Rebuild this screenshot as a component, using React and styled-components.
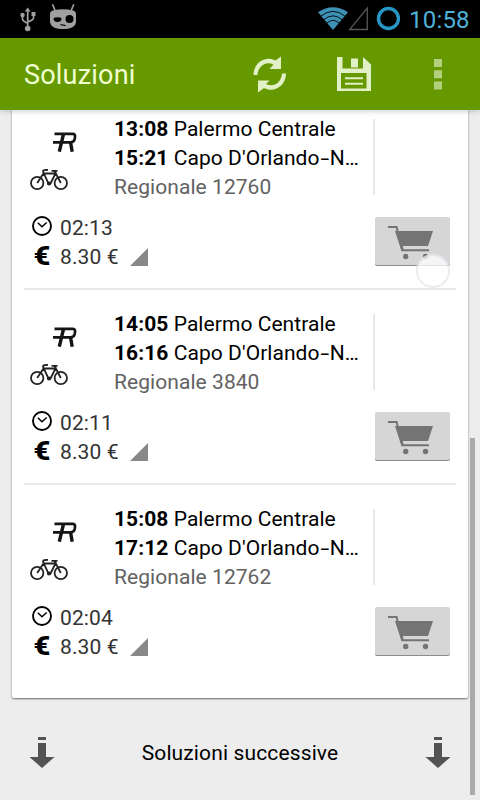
import React from "react";
import styled, { createGlobalStyle } from "styled-components";

const GlobalStyle = createGlobalStyle`
  * { box-sizing: border-box; }
  body { margin: 0; background: #ededed; font-family: Roboto, "Noto Sans", sans-serif; }
  svg { display: block; flex: none; }
`;

const Screen = styled.div`
  width: 480px;
  height: 800px;
  display: flex;
  flex-direction: column;
  overflow: hidden;
  background: #ededed;
`;

const StatusBar = styled.div`
  height: 38px;
  flex: none;
  display: flex;
  align-items: flex-start;
  padding: 0 10px 0 20px;
  background: #000;
`;

const StatusIcons = styled.div`
  display: flex;
  gap: 14px;
  padding-top: 4px;
  flex: 1;
`;

const SignalIcons = styled.div`
  display: flex;
  padding-top: 6px;
`;

const Clock = styled.span`
  width: 61px;
  margin-left: 9px;
  line-height: 40px;
  font-size: 24px;
  letter-spacing: 0.2px;
  color: #4fb0d8;
  white-space: nowrap;
`;

const ActionBar = styled.header`
  height: 72px;
  flex: none;
  display: flex;
  align-items: center;
  padding: 0 38px 0 24px;
  background: #669900;
  box-shadow: 0 1px 6px rgba(0, 0, 0, 0.2);
  z-index: 1;
`;

const Title = styled.h1`
  flex: 1;
  margin: 0;
  padding-top: 2px;
  font-size: 27px;
  font-weight: 400;
  letter-spacing: 0.2px;
  color: #f0ffd0;
`;

const Actions = styled.div`
  display: flex;
  align-items: center;
`;

const Content = styled.main`
  height: 690px;
  display: flex;
  overflow: hidden;
  padding-left: 12px;
`;

const Column = styled.div`
  width: 456px;
  display: flex;
  flex-direction: column;
  justify-content: flex-end;
`;

const Card = styled.section`
  flex: none;
  height: 603px;
  padding: 0 12px;
  background: #fff;
  border-radius: 0 0 2px 2px;
  box-shadow: 0 1px 2px rgba(0, 0, 0, 0.55);
`;

const Row = styled.article`
  height: 195px;
  border-bottom: 2px solid ${(p) => (p.$last ? "transparent" : "#e8e8e8")};
`;

const Journey = styled.div`
  height: 118px;
  display: flex;
  padding-top: 20px;
`;

const TrainIcons = styled.div`
  width: 90px;
  display: flex;
  flex-direction: column;
  gap: 17px;
  padding: 17px 0 0 6px;
`;

const LogoSlot = styled.div`
  padding-left: 23px;
`;

const Stations = styled.div`
  width: 259px;
`;

const Station = styled.div`
  width: 252px;
  font-size: 21px;
  line-height: 29px;
  letter-spacing: 0.06px;
  color: ${(p) => (p.$muted ? "#626262" : "#000")};
  white-space: nowrap;
  b { font-weight: 700; }
`;

const Dash = styled.span`
  display: inline-block;
  margin: 0 2.2px;
  transform: scaleX(1.5);
`;

const Divider = styled.div`
  width: 2px;
  height: 76px;
  margin-top: 4px;
  background: #e8e8e8;
`;

const Details = styled.div`
  display: flex;
  justify-content: space-between;
  padding: 0 6px 0 8px;
`;

const Facts = styled.div`
  display: flex;
  flex-direction: column;
`;

const Fact = styled.div`
  height: 29px;
  display: flex;
  align-items: center;
  font-size: 21px;
  color: #333;
  letter-spacing: 0.1px;
`;

const ClockSlot = styled.div`
  margin-bottom: 3px;
`;

const FactText = styled.span`
  width: 70px;
  padding-left: 8px;
  box-sizing: content-box;
  white-space: nowrap;
`;

const EuroMark = styled.span`
  width: 20px;
  text-align: center;
  font-size: 26px;
  line-height: 29px;
  font-weight: 900;
  color: #000;
  transform: scaleX(1.12);
`;

const CartButton = styled.button`
  position: relative;
  width: 75px;
  height: 48px;
  margin-top: 4px;
  padding: 5px 0 0 13px;
  border: 0;
  border-radius: 2px;
  background: #d6d6d6;
  box-shadow: 0 1px 0 #8c8c8c;
  svg { margin-top: -2px; }
`;

const TouchRing = styled.span`
  position: absolute;
  left: 41px;
  top: 37px;
  width: 34px;
  height: 34px;
  border: 2px solid rgba(205, 205, 220, 0.4);
  border-radius: 50%;
  background: rgba(255, 255, 255, 0.75);
`;

const Footer = styled.footer`
  height: 102px;
  flex: none;
  display: flex;
  align-items: center;
  justify-content: space-between;
  padding: 6px 17px 0;
  font-size: 21px;
  letter-spacing: 0.13px;
  color: #000;
`;

const FooterLabel = styled.span`
  padding-top: 2px;
`;

const ScrollThumb = styled.div`
  width: 5px;
  height: 357px;
  margin: 328px 0 0 2px;
  background: #aaa;
`;

const UsbIcon = () => (
  <svg width="16" height="28" viewBox="0 0 16 28" fill="none" stroke="#a0a0a0" strokeWidth="1.7">
    <path d="M7.7 7V25M2.5 11v4q0 2 5 4.300M13.500 10v4q0 2-5.800 4" />
    <path d="M4.700 7.500L7.700 3.500l3 4z" fill="#a0a0a0" stroke="none" />
    <circle cx="7.700" cy="24.500" r="2.800" fill="#a0a0a0" stroke="none" />
    <circle cx="2.500" cy="11" r="2.200" fill="#a0a0a0" stroke="none" />
    <path d="M11.500 8h4v4h-4z" fill="#a0a0a0" stroke="none" />
  </svg>
);

const CidIcon = () => (
  <svg width="27" height="28" viewBox="0 0 27 28">
    <path d="M2.800 1l2.500 6M23.500 1l-2.500 6" stroke="#a0a0a0" strokeWidth="1.700" strokeLinecap="round" />
    <path d="M3 6.500Q13 4 23 6.500Q26 7 26 10v7q0 8-13 8T0 17v-7Q0 7 3 6.500z" fill="#a0a0a0" />
    <path d="M3.500 14q4-1.500 8 0a4 4 0 0 1-8 0z" fill="#000" />
    <circle cx="19.500" cy="15" r="4" fill="#000" />
    <path d="M10.500 20.500l5 1.200" stroke="#000" strokeWidth="1.200" />
  </svg>
);

const WifiIcon = () => (
  <svg width="30" height="24" viewBox="0 0 30 24">
    <path d="M0 6.300Q15-3.800 30 6.300L15 24z" fill="#3d91b5" />
    <path d="M2.800 10.200Q15 .5 27.200 10.200M5.800 13.700Q15 6 24.200 13.700M9 17Q15 11.700 21 17" fill="none" stroke="#000" strokeWidth="0.900" />
  </svg>
);

const SignalIcon = () => (
  <svg width="22" height="26" viewBox="0 0 22 26">
    <path d="M1.500 23.500H19.300V2z" fill="none" stroke="#555" strokeWidth="1.300" />
  </svg>
);

const BatteryIcon = () => (
  <svg width="24" height="25" viewBox="0 0 24 25">
    <circle cx="12.500" cy="12.500" r="10" fill="none" stroke="#2796c4" strokeWidth="3.400" />
  </svg>
);

const RefreshIcon = () => (
  <svg width="34" height="37" viewBox="0 0 34 37">
    <g fill="#e2f0c8">
      <path d="M.5 19C.5 7 12-1 22.500 4.500L28 .5V13H16.500L20.500 8.500C13 4.500 5 10 4.500 19z" />
      <path d="M33 17.500C33 29.500 21.500 37.500 11 32L5 36.500V24.500H16.500L13 28C20.500 32 28.500 26.500 29 17.500z" />
    </g>
  </svg>
);

const SaveIcon = () => (
  <svg width="34" height="34" viewBox="0 0 34 34">
    <path fill="#e2f0c8" fillRule="evenodd" d="M0 0H5.500V11.500H26V0L34 7.500V34H0zM4 16V31.500H29.500V16z" />
    <path fill="#e2f0c8" d="M14 1.500h7v9h-7zM8 20.200h18v2H8zM8 25.700h18v2H8z" />
  </svg>
);

const MoreIcon = () => (
  <svg width="8" height="31" viewBox="0 0 8 31" fill="#b3d07f">
    <path d="M0 0h8v8H0zM0 11.300h8v8H0zM0 22.500h8v8H0z" />
  </svg>
);

const TrainLogo = () => (
  <svg width="25" height="20" viewBox="0 0 25 20" fill="none" stroke="#151515">
    <path d="M1.500 1.800H19.500Q22.500 1.800 22 4.800L21.700 7Q21 10.300 17.500 10.300H0" strokeWidth="2.700" />
    <path d="M10.500 2L6.300 19.700M17.500 10L19.200 19.700" strokeWidth="3.400" />
  </svg>
);

const BikeIcon = () => (
  <svg width="38" height="22" viewBox="0 0 38 22" fill="none" stroke="#222" strokeWidth="1.800">
    <circle cx="7.200" cy="14" r="6.200" />
    <circle cx="30.800" cy="14" r="6.200" />
    <path d="M7.200 14L13.500 4.500H25.500L20.500 14.500H18.500L13 2.500Q13 .8 18 .8M30.800 14L24.500 1.800M21.500 1.800H27.500" />
    <circle cx="19" cy="14.500" r="1.200" />
  </svg>
);

const ClockIcon = () => (
  <svg width="20" height="20" viewBox="0 0 20 20" fill="none" stroke="#000" strokeWidth="1.900">
    <circle cx="10" cy="10" r="9" />
    <path d="M5.800 6.700L10 10.800L14.700 6.500" strokeWidth="1.500" />
  </svg>
);

const Corner = () => (
  <svg width="18" height="18" viewBox="0 0 18 18">
    <path d="M0 18L18 0V18z" fill="#888" />
  </svg>
);

const CartIcon = () => (
  <svg width="46" height="36" viewBox="0 0 46 36">
    <path d="M0 2H8.600L14.300 25.300H41" fill="none" stroke="#747474" strokeWidth="2" />
    <path d="M7 6H45L40 21H14.800L16 26H13.500z" fill="#747474" />
    <circle cx="17.700" cy="31.500" r="2.700" fill="#747474" />
    <circle cx="37.500" cy="31.500" r="2.700" fill="#747474" />
  </svg>
);

const DownIcon = () => (
  <svg width="26" height="32" viewBox="0 0 26 32" fill="#535353">
    <path d="M9 1h8v3H9zM9 7h8v14h8.500L13 32L.5 21H9z" />
  </svg>
);

const Space = styled.span`
  width: ${(p) => p.$w}px;
`;

const solutions = [
  { dep: "13:08", arr: "15:21", train: "Regionale 12760", time: "02:13", touched: true },
  { dep: "14:05", arr: "16:16", train: "Regionale 3840", time: "02:11" },
  { dep: "15:08", arr: "17:12", train: "Regionale 12762", time: "02:04" },
];

function Solution({ item, last }) {
  return (
    <Row $last={last}>
      <Journey>
        <TrainIcons>
          <LogoSlot><TrainLogo /></LogoSlot>
          <BikeIcon />
        </TrainIcons>
        <Stations>
          <Station><b>{item.dep}</b> Palermo Centrale</Station>
          <Station><b>{item.arr}</b> Capo D'Orlando<Dash>-</Dash>N…</Station>
          <Station $muted>{item.train}</Station>
        </Stations>
        <Divider />
      </Journey>
      <Details>
        <Facts>
          <Fact><ClockSlot><ClockIcon /></ClockSlot><FactText>{item.time}</FactText></Fact>
          <Fact><EuroMark>€</EuroMark><FactText>8.30 €</FactText><Corner /></Fact>
        </Facts>
        <CartButton>
          <CartIcon />
          {item.touched && <TouchRing />}
        </CartButton>
      </Details>
    </Row>
  );
}

export default function App() {
  return (
    <Screen>
      <GlobalStyle />
      <StatusBar>
        <StatusIcons><UsbIcon /><CidIcon /></StatusIcons>
        <SignalIcons><WifiIcon /><SignalIcon /><Space $w={6} /><BatteryIcon /></SignalIcons>
        <Clock>10:58</Clock>
      </StatusBar>
      <ActionBar>
        <Title>Soluzioni</Title>
        <Actions>
          <RefreshIcon /><Space $w={50} /><SaveIcon /><Space $w={63} /><MoreIcon />
        </Actions>
      </ActionBar>
      <Content>
        <Column>
          <Card>
            {solutions.map((s, i) => (
              <Solution key={s.dep} item={s} last={i === solutions.length - 1} />
            ))}
          </Card>
          <Footer><DownIcon /><FooterLabel>Soluzioni successive</FooterLabel><DownIcon /></Footer>
        </Column>
        <ScrollThumb />
      </Content>
    </Screen>
  );
}
